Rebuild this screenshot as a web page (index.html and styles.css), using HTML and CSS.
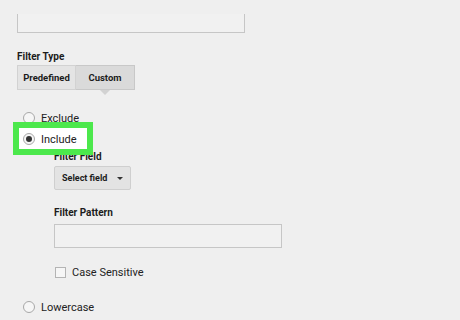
FILE: index.html
```html
<!doctype html>
<html lang="en">
<head>
    <meta charset="UTF-8">
    <title>Filter settings</title>
    <link rel="stylesheet" href="styles.css">
</head>
<body>

<!-- Filter name field (scrolled) -->
<div class="top-input"></div>

<!-- Filter type -->
<div class="field-label type-label">Filter Type</div>
<div class="seg">
    <div class="seg-btn">Predefined</div>
    <div class="seg-btn active">Custom</div>
</div>

<!-- Options -->
<div class="options">
    <div class="option">
        <span class="radio"></span>
        <span>Exclude</span>
    </div>
    <div class="option highlight">
        <span class="radio checked"></span>
        <span>Include</span>
    </div>
</div>

<div class="custom-fields">
    <div class="field-label">Filter Field</div>
    <div class="select-btn">
        <span>Select field</span>
        <span class="caret"></span>
    </div>

    <div class="field-label pattern-label">Filter Pattern</div>
    <div class="text-input"></div>

    <div class="check-row">
        <span class="checkbox"></span>
        <span>Case Sensitive</span>
    </div>
</div>

<div class="options lower">
    <div class="option">
        <span class="radio"></span>
        <span>Lowercase</span>
    </div>
</div>

</body>
</html>
```

FILE: styles.css
```css
body {
    margin: 0;
    padding: 0 0 0 17px;
    background-color: #efefef;
    font-family: Roboto, Arial, sans-serif;
    font-size: 11px;
    color: #222;
    overflow: hidden;
}
.top-input {
    box-sizing: border-box;
    margin-top: 14px;
    width: 228px;
    height: 19px;
    border: 1px solid #c6c6c6;
    border-top: none;
    background-color: #f1f1f1;
}
.field-label {
    font-weight: bold;
    font-size: 10px;
    line-height: 14px;
    color: #1c1c1c;
}
.type-label {
    margin-top: 17px;
}
.seg {
    display: flex;
    margin-top: 1px;
    height: 25px;
}
.seg-btn {
    display: flex;
    align-items: center;
    justify-content: center;
    box-sizing: border-box;
    width: 59px;
    font-size: 9.5px;
    font-weight: bold;
    background-color: #e4e4e4;
    border: 1px solid #d2d2d2;
    color: #1c1c1c;
}
.seg-btn + .seg-btn {
    border-left: none;
}
.seg-btn.active {
    position: relative;
    background-color: #dadada;
    border-color: #c8c8c8;
}
.seg-btn.active::after {
    content: '';
    position: absolute;
    left: 24px;
    bottom: -6px;
    border-left: 5px solid transparent;
    border-right: 5px solid transparent;
    border-top: 5px solid #d2d2d2;
}
.options {
    display: flex;
    flex-direction: column;
    gap: 5px;
    margin-top: 20px;
    padding-left: 6px;
}
.option {
    display: flex;
    align-items: center;
    gap: 6px;
    height: 16px;
}
.radio {
    box-sizing: border-box;
    width: 12px;
    height: 12px;
    border: 1px solid #a8a8a8;
    border-radius: 50%;
    background-color: #f6f6f6;
    display: flex;
    align-items: center;
    justify-content: center;
}
.radio.checked::after {
    content: '';
    width: 6px;
    height: 6px;
    border-radius: 50%;
    background-color: #333;
}
.option.highlight {
    position: relative;
    z-index: 1;
}
.option.highlight::before {
    content: '';
    position: absolute;
    left: -10px;
    top: -9px;
    width: 68px;
    height: 21px;
    border: 6px solid #4ce84c;
    background-color: #fff;
    z-index: -1;
}
.custom-fields {
    padding-left: 37px;
    margin-top: 3px;
}
.select-btn {
    box-sizing: border-box;
    display: flex;
    align-items: center;
    justify-content: space-between;
    margin-top: 2px;
    width: 77px;
    height: 24px;
    padding: 0 7px;
    font-size: 9px;
    font-weight: bold;
    background-color: #e3e3e3;
    border: 1px solid #cfcfcf;
    border-radius: 2px;
    color: #1c1c1c;
}
.caret {
    border-left: 3px solid transparent;
    border-right: 3px solid transparent;
    border-top: 3px solid #333;
}
.pattern-label {
    margin-top: 16px;
}
.text-input {
    box-sizing: border-box;
    margin-top: 4px;
    width: 228px;
    height: 24px;
    border: 1px solid #c6c6c6;
    background-color: #f1f1f1;
}
.check-row {
    display: flex;
    align-items: center;
    gap: 6px;
    margin-top: 18px;
    padding-left: 1px;
    height: 12px;
}
.checkbox {
    box-sizing: border-box;
    width: 11px;
    height: 11px;
    border: 1px solid #b4b4b4;
    background-color: #f6f6f6;
}
.lower {
    margin-top: 21px;
}
```
